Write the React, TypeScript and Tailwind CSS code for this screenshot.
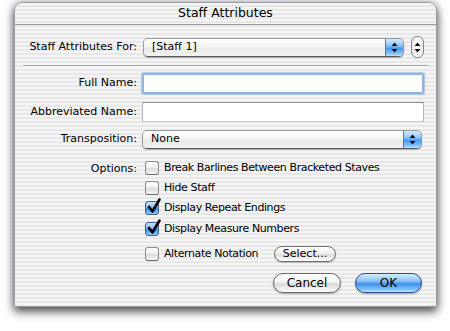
import React from "react";

const font = { fontFamily: '"DejaVu Sans", "Liberation Sans", sans-serif' };

const Arrows = ({ color = "#111" }: { color?: string }) => (
  <svg width="7" height="11" viewBox="0 0 7 11">
    <path d="M3.5 0.5 L6.5 4 L0.5 4 Z" fill={color} />
    <path d="M3.5 10.5 L6.5 7 L0.5 7 Z" fill={color} />
  </svg>
);

const Popup = ({ value }: { value: string }) => (
  <div className="flex h-[19px] flex-1 items-stretch overflow-hidden rounded-[5px] border border-[#9a9a9a] border-b-[#555] shadow-[0_1px_1px_rgba(0,0,0,0.25)]">
    <div className="flex flex-1 items-center bg-[linear-gradient(180deg,#ffffff_0%,#f4f4f4_45%,#e9e9e9_55%,#f2f2f2_100%)] pl-[8px] text-[11px] text-black">
      {value}
    </div>
    <div className="flex w-[18px] items-center justify-center border-l border-[#4a7fc4] bg-[linear-gradient(180deg,#d2e9ff_0%,#8cc3f7_40%,#4a98ea_55%,#7fc0fb_85%,#bfe4ff_100%)]">
      <Arrows />
    </div>
  </div>
);

const Check = ({ checked }: { checked?: boolean }) =>
  checked ? (
    <div className="relative h-[14px] w-[14px] rounded-[3px] border border-[#3b5f96] bg-[linear-gradient(180deg,#cfe6fd_0%,#7db7f2_45%,#3e8de4_55%,#8fcbff_100%)]">
      <svg className="absolute left-[1px] top-[-4px]" width="14" height="16" viewBox="0 0 14 16">
        <path d="M2 9 L5.5 13.5 L12.5 1.5" stroke="#000" strokeWidth="2.6" fill="none" strokeLinecap="round" strokeLinejoin="round" />
      </svg>
    </div>
  ) : (
    <div className="h-[14px] w-[14px] rounded-[3px] border border-[#8b8b8b] border-b-[#666] bg-[linear-gradient(180deg,#ffffff_0%,#f0f0f0_45%,#dcdcdc_55%,#f6f6f6_100%)] shadow-[inset_0_1px_0_#fff]" />
  );

const Option = ({ label, checked }: { label: string; checked?: boolean }) => (
  <div className="flex h-[20px] items-center gap-[5px]">
    <Check checked={checked} />
    <span className="text-[11px] tracking-[-0.4px] text-black">{label}</span>
  </div>
);

export default function App() {
  return (
    <div className="h-[331px] w-[450px] overflow-hidden bg-white pl-[14px] pt-[2px]" style={font}>
      <div className="flex h-[305px] w-[423px] flex-col rounded-t-[8px] border border-[#9c9c9c] bg-[repeating-linear-gradient(180deg,#f5f5f5_0px,#f5f5f5_2px,#e8e8e8_2px,#e8e8e8_4px)] shadow-[0_5px_10px_rgba(0,0,0,0.6),0_0_8px_rgba(70,70,110,0.45)]">
        {/* title */}
        <div className="flex h-[22px] items-center justify-center border-b border-[#9a9a9a] text-[12.5px] text-black">
          Staff Attributes
        </div>

        {/* staff selector */}
        <div className="mt-[11px] flex items-center pr-[12px]">
          <div className="w-[122px] text-right text-[11px] text-black">Staff Attributes For:</div>
          <div className="ml-[6px] flex flex-1 items-center gap-[7px]">
            <Popup value="[Staff 1]" />
            <div className="flex h-[22px] w-[13px] items-center justify-center rounded-[6px] border border-[#8a8a8a] bg-[linear-gradient(90deg,#e6e6e6,#ffffff_50%,#e6e6e6)]">
              <Arrows />
            </div>
          </div>
        </div>

        <div className="mx-[8px] mt-[7px] h-px bg-[#9f9f9f] shadow-[0_1px_0_#fff]" />

        {/* name fields */}
        <div className="mt-[7px] flex items-center pr-[12px]">
          <div className="w-[122px] text-right text-[11px] text-black">Full Name:</div>
          <div className="ml-[5px] h-[21px] flex-1 rounded-[2px] border-[2px] border-[#8fb6e3] bg-white shadow-[0_0_1px_1px_rgba(110,160,220,0.5)]" />
        </div>
        <div className="mt-[8px] flex items-center pr-[12px]">
          <div className="w-[122px] text-right text-[11px] text-black">Abbreviated Name:</div>
          <div className="ml-[5px] h-[20px] flex-1 border border-[#8d8d8d] border-l-[#b5b5b5] border-r-[#b5b5b5] border-b-[#c8c8c8] bg-white" />
        </div>
        <div className="mt-[8px] flex items-center pr-[14px]">
          <div className="w-[122px] text-right text-[11px] text-black">Transposition:</div>
          <div className="ml-[5px] flex flex-1">
            <Popup value="None" />
          </div>
        </div>

        {/* options */}
        <div className="mt-[9px] flex">
          <div className="w-[122px] pt-[3px] text-right text-[11px] text-black">Options:</div>
          <div className="ml-[8px] flex flex-col">
            <Option label="Break Barlines Between Bracketed Staves" />
            <Option label="Hide Staff" />
            <Option label="Display Repeat Endings" checked />
            <div className="mt-[1px]">
              <Option label="Display Measure Numbers" checked />
            </div>
            <div className="mt-[5px] flex h-[20px] items-center">
              <Check />
              <span className="ml-[5px] w-[110px] text-[11px] tracking-[-0.4px] text-black">Alternate Notation</span>
              <button className="flex h-[16px] w-[62px] items-center justify-center rounded-full border border-[#6f6f6f] bg-[linear-gradient(180deg,#ffffff_0%,#f2f2f2_45%,#dedede_55%,#ffffff_100%)] text-[11px] text-black shadow-[0_1px_1px_rgba(0,0,0,0.2)]">
                Select...
              </button>
            </div>
          </div>
        </div>

        {/* buttons */}
        <div className="mt-[9px] flex justify-end gap-[14px] pr-[14px]">
          <button className="flex h-[20px] w-[68px] items-center justify-center rounded-full border border-[#6a6a6a] bg-[linear-gradient(180deg,#ffffff_0%,#f3f3f3_45%,#dadada_55%,#ffffff_100%)] text-[12px] text-black shadow-[0_1px_2px_rgba(0,0,0,0.3)]">
            Cancel
          </button>
          <button className="flex h-[20px] w-[67px] items-center justify-center rounded-full border border-[#2b4f8c] bg-[linear-gradient(180deg,#d6ebff_0%,#88c1f6_40%,#3f8fe6_55%,#7cc3ff_85%,#c5e8ff_100%)] text-[12px] text-black shadow-[0_1px_2px_rgba(0,0,0,0.35)]">
            OK
          </button>
        </div>
      </div>
    </div>
  );
}
